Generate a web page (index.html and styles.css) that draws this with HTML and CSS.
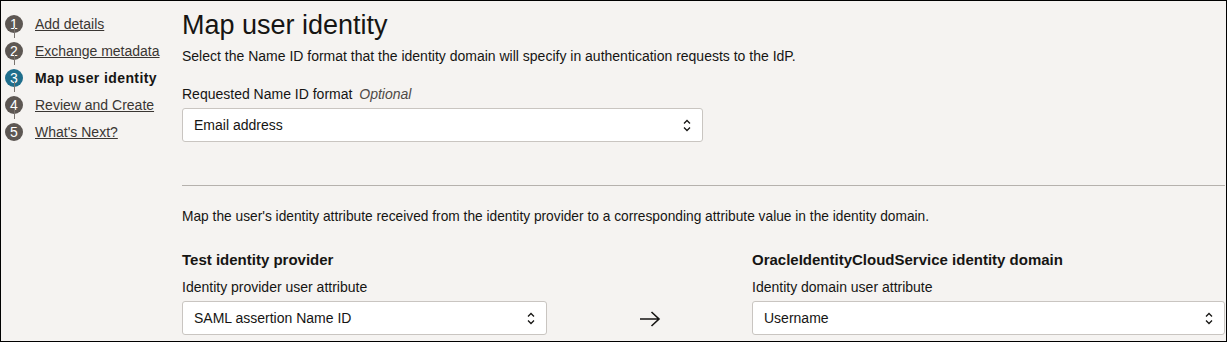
FILE: index.html
```html
<!DOCTYPE html>
<html>
<head>
<meta charset="utf-8">
<link rel="stylesheet" href="styles.css">
</head>
<body>
<div class="frame">
  <nav class="steps">
    <div class="step"><span class="dot">1</span><a class="link">Add details</a></div>
    <div class="step"><span class="dot">2</span><a class="link">Exchange metadata</a></div>
    <div class="step active"><span class="dot">3</span><span class="current">Map user identity</span></div>
    <div class="step"><span class="dot">4</span><a class="link">Review and Create</a></div>
    <div class="step last"><span class="dot">5</span><a class="link">What's Next?</a></div>
  </nav>
  <main class="main">
    <h1 class="title">Map user identity</h1>
    <p class="desc">Select the Name ID format that the identity domain will specify in authentication requests to the IdP.</p>
    <div class="label label-first">Requested Name ID format <em class="opt">Optional</em></div>
    <div class="select select-wide"><span>Email address</span>
      <svg class="chev" width="8" height="13" viewBox="0 0 8 13"><path d="M1 4.5 L4 1.5 L7 4.5 M1 8.5 L4 11.5 L7 8.5" fill="none" stroke="#161513" stroke-width="1.3"/></svg>
    </div>
    <hr class="rule">
    <p class="desc desc2">Map the user's identity attribute received from the identity provider to a corresponding attribute value in the identity domain.</p>
    <div class="mapping">
      <div class="col">
        <div class="colhead">Test identity provider</div>
        <div class="label">Identity provider user attribute</div>
        <div class="select"><span>SAML assertion Name ID</span>
          <svg class="chev" width="8" height="13" viewBox="0 0 8 13"><path d="M1 4.5 L4 1.5 L7 4.5 M1 8.5 L4 11.5 L7 8.5" fill="none" stroke="#161513" stroke-width="1.3"/></svg>
        </div>
      </div>
      <div class="arrowcol">
        <svg width="22" height="16" viewBox="0 0 22 16"><path d="M1 8 H20 M12.5 1 L20 8 L12.5 15" fill="none" stroke="#161513" stroke-width="1.6"/></svg>
      </div>
      <div class="col">
        <div class="colhead">OracleIdentityCloudService identity domain</div>
        <div class="label">Identity domain user attribute</div>
        <div class="select"><span>Username</span>
          <svg class="chev" width="8" height="13" viewBox="0 0 8 13"><path d="M1 4.5 L4 1.5 L7 4.5 M1 8.5 L4 11.5 L7 8.5" fill="none" stroke="#161513" stroke-width="1.3"/></svg>
        </div>
      </div>
    </div>
  </main>
</div>
</body>
</html>
```
FILE: styles.css
```css
html, body {
  margin: 0;
  padding: 0;
  background: #ffffff;
}
body {
  font-family: "Liberation Sans", Arial, sans-serif;
  color: #161513;
}
.frame {
  box-sizing: border-box;
  width: 1227px;
  height: 342px;
  border: 1px solid #000;
  background: #f5f3f1;
  display: flex;
  overflow: hidden;
}
.steps {
  width: 181px;
  flex: none;
  padding-top: 9px;
}
.step {
  position: relative;
  display: flex;
  align-items: center;
  height: 27px;
  padding-left: 4px;
}
.step::after {
  content: "";
  position: absolute;
  left: 13px;
  top: 18px;
  width: 1px;
  height: 10px;
  background: #7a746f;
}
.step.last::after { display: none; }
.dot {
  width: 18px;
  height: 18px;
  border-radius: 50%;
  background: #5d5753;
  color: #fff;
  font-size: 14px;
  line-height: 18px;
  text-align: center;
  flex: none;
}
.step.active .dot { background: #1f6e8c; }
.link, .current {
  margin-left: 12px;
  font-size: 14px;
  color: #3a3633;
}
.link { text-decoration: underline; }
.current { font-weight: bold; color: #161513; letter-spacing: 0.4px; }
.main {
  flex: 1;
  padding: 9px 1px 0 0;
  min-width: 0;
}
.title {
  margin: 0;
  font-size: 27px;
  line-height: 30px;
  font-weight: normal;
}
.desc {
  margin: 8px 0 0;
  font-size: 14px;
  line-height: 16px;
}
.label {
  margin-top: 10px;
  font-size: 14px;
  line-height: 16px;
}
.label-first { margin-top: 22px; }
.opt { font-style: italic; color: #4f4a46; margin-left: 3px; }
.select {
  box-sizing: border-box;
  margin-top: 6px;
  height: 34px;
  background: #fff;
  border: 1px solid #c9c5c1;
  border-radius: 3px;
  display: flex;
  align-items: center;
  justify-content: space-between;
  padding: 0 11px 0 11px;
  font-size: 14px;
}
.select-wide { width: 521px; }
.chev { flex: none; }
.rule {
  margin: 43px 0 0;
  border: 0;
  border-top: 1px solid #b5b1ad;
  height: 0;
}
.desc2 { margin-top: 23px; font-size: 13.75px; }
.mapping {
  display: grid;
  grid-template-columns: 365px 205px 1fr;
  margin-top: 26px;
}
.colhead {
  font-size: 15px;
  line-height: 18px;
  font-weight: bold;
}
.arrowcol {
  display: flex;
  align-items: flex-end;
  justify-content: center;
  padding-bottom: 8px;
}
```
